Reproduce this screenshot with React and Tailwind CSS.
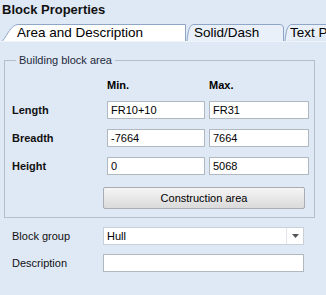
import React from 'react';

const font = { fontFamily: '"Liberation Sans", Arial, sans-serif' };

const Tab = ({ label, active, width, shape }) => (
  <div className={`relative h-[17px] shrink-0 ${width}`}>
    <svg className="absolute inset-0 w-full h-full" viewBox={shape.viewBox} preserveAspectRatio="none">
      <path d={shape.d} fill={active ? '#ffffff' : '#e9f0f9'} stroke="#8fa7c6" strokeWidth="1" />
    </svg>
    <span className={`relative block whitespace-nowrap text-[13.5px] leading-[17px] text-black ${shape.pad}`}>{label}</span>
  </div>
);

const Field = ({ value, className = '' }) => (
  <div className={`h-[18px] bg-white border border-[#b2b8c0] px-[3px] text-[11px] leading-[16px] text-black ${className}`}>
    {value}
  </div>
);

export default function App() {
  const rows = [
    ['Length', 'FR10+10', 'FR31'],
    ['Breadth', '-7664', '7664'],
    ['Height', '0', '5068'],
  ];

  return (
    <div className="w-[326px] h-[295px] overflow-hidden bg-[#dfe8f5] flex flex-col" style={font}>
      <div className="h-[22px] pl-[2px] pt-[2px] text-[13px] font-bold leading-[15px] text-[#111]">Block Properties</div>

      <div className="flex items-end h-[19px] pl-[2px] overflow-hidden">
        <Tab
          label="Area and Description"
          active
          width="w-[184px]"
          shape={{ viewBox: '0 0 184 17', d: 'M0.5 17 C6 10 9 1 16 0.5 L183.5 0.5 L183.5 17', pad: 'pl-[15px]' }}
        />
        <Tab
          label="Solid/Dash"
          width="w-[98px]"
          shape={{ viewBox: '0 0 98 17', d: 'M1 17 C2 8 3 0.5 8 0.5 L94 0.5 Q97.5 0.5 97.5 4 L97.5 17', pad: 'pl-[8px]' }}
        />
        <Tab
          label="Text Properties"
          width="w-[110px]"
          shape={{ viewBox: '0 0 110 17', d: 'M1 17 C2 8 3 0.5 8 0.5 L110 0.5', pad: 'pl-[6px]' }}
        />
      </div>

      <div className="flex-1 border-t border-[#eef3fa] bg-[#dfe8f5] pt-[12px]">
        <fieldset className="ml-[4px] w-[307px] border border-[#b4bfcc] pl-[7px] pr-[5px] pb-[8px]">
          <legend className="ml-[4px] px-[3px] text-[11px] leading-[13px] text-[#1e2a3a]">Building block area</legend>
          <div className="grid grid-cols-[91px_98px_100px] items-center gap-x-[4px] gap-y-[10px] pt-[12px]">
            <div />
            <div className="text-[11px] font-bold leading-[12px]">Min.</div>
            <div className="text-[11px] font-bold leading-[12px]">Max.</div>
            {rows.map(([label, min, max]) => (
              <React.Fragment key={label}>
                <div className="text-[11px] font-bold leading-[18px] text-[#111]">{label}</div>
                <Field value={min} />
                <Field value={max} />
              </React.Fragment>
            ))}
          </div>
          <div className="flex mt-[12px] pl-[91px]">
            <button className="w-[202px] h-[22px] border border-[#a9adb2] rounded-[2px] bg-gradient-to-b from-[#f5f5f5] to-[#dadada] text-[11px] text-black">
              Construction area
            </button>
          </div>
        </fieldset>

        <div className="flex flex-col gap-[9px] mt-[9px] pl-[12px]">
          <div className="flex items-center">
            <div className="w-[91px] text-[11px] text-[#111]">Block group</div>
            <div className="w-[201px] h-[18px] bg-white border border-[#c9d0d8] flex">
              <div className="flex-1 px-[3px] text-[11px] leading-[16px]">Hull</div>
              <div className="w-[17px] border-l border-[#e2e6ea] flex items-center justify-center">
                <svg width="7" height="4" viewBox="0 0 7 4"><path d="M0 0 L7 0 L3.5 4 Z" fill="#555" /></svg>
              </div>
            </div>
          </div>
          <div className="flex items-center">
            <div className="w-[91px] text-[11px] text-[#111]">Description</div>
            <Field value="" className="w-[201px]" />
          </div>
        </div>
      </div>
    </div>
  );
}
